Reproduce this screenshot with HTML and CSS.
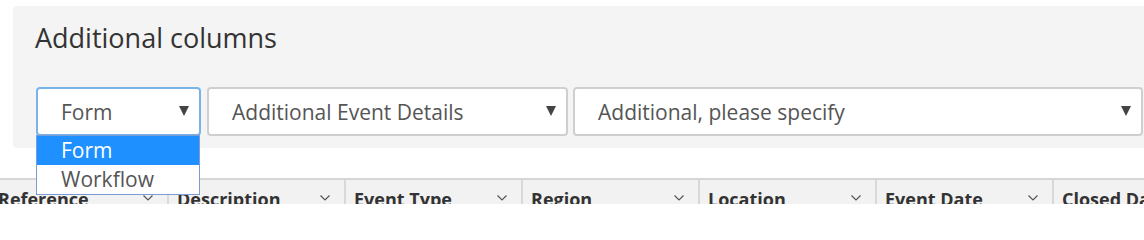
FILE: index.html
```html
<!DOCTYPE html>
<html>
<head>
<meta charset="utf-8">
<link rel="stylesheet" href="styles.css">
</head>
<body>
<div class="panel">
  <h2 class="title">Additional columns</h2>
  <div class="selects">
    <div class="select-wrap s1">
      <div class="select focus"><span>Form</span><i class="caret"></i></div>
      <ul class="dropdown">
        <li class="active">Form</li>
        <li>Workflow</li>
      </ul>
    </div>
    <div class="select-wrap s2">
      <div class="select"><span>Additional Event Details</span><i class="caret"></i></div>
    </div>
    <div class="select-wrap s3">
      <div class="select"><span>Additional, please specify</span><i class="caret"></i></div>
    </div>
  </div>
</div>
<div class="table-wrap">
  <div class="thead">
    <div class="th first"><span>Reference</span><svg class="chev" viewBox="0 0 10 6"><polyline points="0.5,0.5 5,5 9.5,0.5"/></svg></div>
    <div class="th"><span>Description</span><svg class="chev" viewBox="0 0 10 6"><polyline points="0.5,0.5 5,5 9.5,0.5"/></svg></div>
    <div class="th"><span>Event Type</span><svg class="chev" viewBox="0 0 10 6"><polyline points="0.5,0.5 5,5 9.5,0.5"/></svg></div>
    <div class="th"><span>Region</span><svg class="chev" viewBox="0 0 10 6"><polyline points="0.5,0.5 5,5 9.5,0.5"/></svg></div>
    <div class="th"><span>Location</span><svg class="chev" viewBox="0 0 10 6"><polyline points="0.5,0.5 5,5 9.5,0.5"/></svg></div>
    <div class="th"><span>Event Date</span><svg class="chev" viewBox="0 0 10 6"><polyline points="0.5,0.5 5,5 9.5,0.5"/></svg></div>
    <div class="th"><span>Closed Date</span><svg class="chev" viewBox="0 0 10 6"><polyline points="0.5,0.5 5,5 9.5,0.5"/></svg></div>
  </div>
</div>
</body>
</html>
```
FILE: styles.css
```css
html, body {
  margin: 0;
  padding: 0;
  background: #fff;
  overflow: hidden;
  width: 1144px;
  height: 204px;
}
body {
  font-family: "Open Sans", "Liberation Sans", sans-serif;
  color: #555;
}
.panel {
  margin: 6px 0 0 13px;
  width: 1160px;
  height: 142px;
  box-sizing: border-box;
  background: #f4f4f4;
  border-radius: 4px;
  padding: 17px 0 0 22px;
}
.title {
  margin: 0;
  font-size: 27px;
  font-weight: 400;
  line-height: 30px;
  color: #333;
}
.selects {
  display: flex;
  gap: 6px;
  margin-top: 34px;
  margin-left: 1px;
}
.select-wrap {
  position: relative;
}
.s1 { width: 165px; }
.s2 { width: 361px; }
.s3 { width: 570px; margin-left: -1px; }
.select {
  height: 49px;
  box-sizing: border-box;
  border: 2px solid #cfcfcf;
  border-radius: 4px;
  background: #fff;
  display: flex;
  align-items: center;
  padding: 0 10px 0 23px;
  font-size: 21px;
  color: #555;
}
.select span { flex: 1; white-space: nowrap; }
.select.focus {
  border-color: #78b4ea;
}
.caret {
  width: 0;
  height: 0;
  border-left: 5px solid transparent;
  border-right: 5px solid transparent;
  border-top: 10px solid #444;
  margin-top: -2px;
}
.dropdown {
  position: absolute;
  top: 48px;
  left: 0;
  width: 164px;
  box-sizing: border-box;
  margin: 0;
  padding: 0;
  list-style: none;
  background: #fff;
  border: 1px solid #7a9cd3;
  z-index: 5;
}
.dropdown li {
  height: 29px;
  line-height: 28px;
  padding-left: 24px;
  font-size: 21px;
  color: #555;
}
.dropdown li.active {
  background: #1e90ff;
  color: #fff;
}
.table-wrap {
  margin-top: 30px;
  margin-left: -8px;
}
.thead {
  display: flex;
  border-top: 2px solid #d6d6d6;
  background: #f2f2f2;
  height: 40px;
}
.th {
  flex: none;
  border-right: 2px solid #d9d9d9;
  display: flex;
  align-items: flex-start;
  padding: 7px 14px 0 8px;
  box-sizing: content-box;
  width: 153px;
  font-weight: 700;
  font-size: 18px;
  color: #333;
}
.th.first { padding-left: 6px; width: 155px; }
.th span { flex: 1; white-space: nowrap; overflow: hidden; }
.chev {
  width: 10px;
  height: 6px;
  margin-top: 8px;
  fill: none;
  stroke: #555;
  stroke-width: 1.2;
}
```
